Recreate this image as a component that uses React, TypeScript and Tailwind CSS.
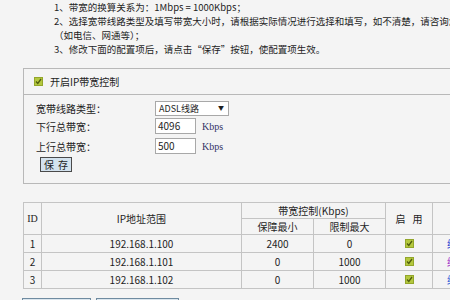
import React from "react";

const font = {
  fontFamily: '"Noto Sans CJK SC", "Liberation Sans", sans-serif',
};

const serif = { fontFamily: '"Liberation Serif", serif' };

const Check = () => (
  <span className="inline-flex w-[9px] h-[9px] items-center justify-center bg-[#b4c83e] border border-[#93a62b]">
    <svg width="7" height="7" viewBox="0 0 7 7">
      <path d="M1 3.5 L2.8 5.4 L6 1" stroke="#4f5d0e" strokeWidth="1.3" fill="none" />
    </svg>
  </span>
);

const rows = [
  { id: "1", ip: "192.168.1.100", min: "2400", max: "0", link: "text-[#1f3fd0]" },
  { id: "2", ip: "192.168.1.101", min: "0", max: "1000", link: "text-[#a030c8]" },
  { id: "3", ip: "192.168.1.102", min: "0", max: "1000", link: "text-[#3060d8]" },
];

const cell = "border border-[#c4c4c4] p-0";

const App = () => {
  return (
    <div
      className="w-[450px] h-[300px] overflow-hidden bg-[#f4f4f4] text-[#1e1e1e] text-[10px]"
      style={font}
    >
      <div className="pl-[54px] leading-[14px] whitespace-nowrap text-[9.5px]">
        <p>1、带宽的换算关系为：1Mbps = 1000Kbps；</p>
        <p>2、选择宽带线路类型及填写带宽大小时，请根据实际情况进行选择和填写，如不清楚，请咨询您的带宽提供商</p>
        <p>（如电信、网通等）；</p>
        <p>3、修改下面的配置项后，请点击“保存”按钮，使配置项生效。</p>
      </div>

      <div className="mt-[12px] ml-[23px] w-[440px] border border-[#b8b8b8]">
        <div className="h-[26px] border-b border-[#b8b8b8] flex items-center pl-[10px] gap-[7px]">
          <Check />
          <span>开启IP带宽控制</span>
        </div>
        <div className="pl-[12px] pt-[5px] pb-[11px] flex flex-col">
          <div className="flex items-center h-[16px]">
            <span className="w-[119px]">宽带线路类型：</span>
            <div className="w-[74px] h-[15px] bg-white border border-[#a8a8a8] flex items-center justify-between pl-[3px] pr-[4px] text-[9px] leading-none">
              <span>ADSL线路</span>
              <span className="text-[6px]">▼</span>
            </div>
          </div>
          <div className="flex items-center h-[16px] mt-[2px]">
            <span className="w-[119px]">下行总带宽：</span>
            <div className="w-[41px] h-[16px] bg-white border border-[#a8a8a8] pl-[2px] leading-[14px]">4096</div>
            <span className="ml-[6px] text-[10px] text-[#333366]" style={serif}>Kbps</span>
          </div>
          <div className="flex items-center h-[16px] mt-[4px]">
            <span className="w-[119px]">上行总带宽：</span>
            <div className="w-[41px] h-[16px] bg-white border border-[#a8a8a8] pl-[2px] leading-[14px]">500</div>
            <span className="ml-[6px] text-[10px] text-[#333366]" style={serif}>Kbps</span>
          </div>
          <div className="mt-[3px] ml-[4px] flex">
            <button className="w-[32px] h-[15px] bg-[#d3e2ee] border border-[#4a4a4a] text-[10px] leading-[13px] flex items-center justify-center gap-[4px]">
              <span>保</span>
              <span>存</span>
            </button>
          </div>
        </div>
      </div>

      <table className="mt-[18px] ml-[23px] w-[450px] table-fixed border-collapse text-center leading-[14px]">
        <colgroup>
          <col className="w-[18px]" />
          <col className="w-[200px]" />
          <col className="w-[72px]" />
          <col className="w-[72px]" />
          <col className="w-[47px]" />
          <col className="w-[41px]" />
        </colgroup>
        <tbody>
          <tr className="h-[16px]">
            <td rowSpan={2} className={cell} style={serif}>ID</td>
            <td rowSpan={2} className={cell}>IP地址范围</td>
            <td colSpan={2} className={cell}>带宽控制(Kbps)</td>
            <td rowSpan={2} className={cell}>
              <div className="flex justify-center gap-[7px]">
                <span>启</span>
                <span>用</span>
              </div>
            </td>
            <td rowSpan={2} className={cell}></td>
          </tr>
          <tr className="h-[16px]">
            <td className={cell}>保障最小</td>
            <td className={cell}>限制最大</td>
          </tr>
          {rows.map((r) => (
            <tr key={r.id} className="h-[18px]">
              <td className={cell}>{r.id}</td>
              <td className={cell}>{r.ip}</td>
              <td className={cell}>{r.min}</td>
              <td className={cell}>{r.max}</td>
              <td className={cell}>
                <div className="flex justify-center">
                  <Check />
                </div>
              </td>
              <td className={`${cell} text-left pl-[14px] whitespace-nowrap ${r.link}`}>编辑</td>
            </tr>
          ))}
        </tbody>
      </table>

      <div className="mt-[9px] ml-[22px] flex gap-[5px]">
        <button className="w-[69px] h-[20px] bg-[#dbe6ee] border border-[#6f8ba0] text-[10px]">添加新条目</button>
        <button className="w-[83px] h-[20px] bg-[#dbe6ee] border border-[#6f8ba0] text-[10px]">删除所有条目</button>
      </div>
    </div>
  );
};

export default App;
